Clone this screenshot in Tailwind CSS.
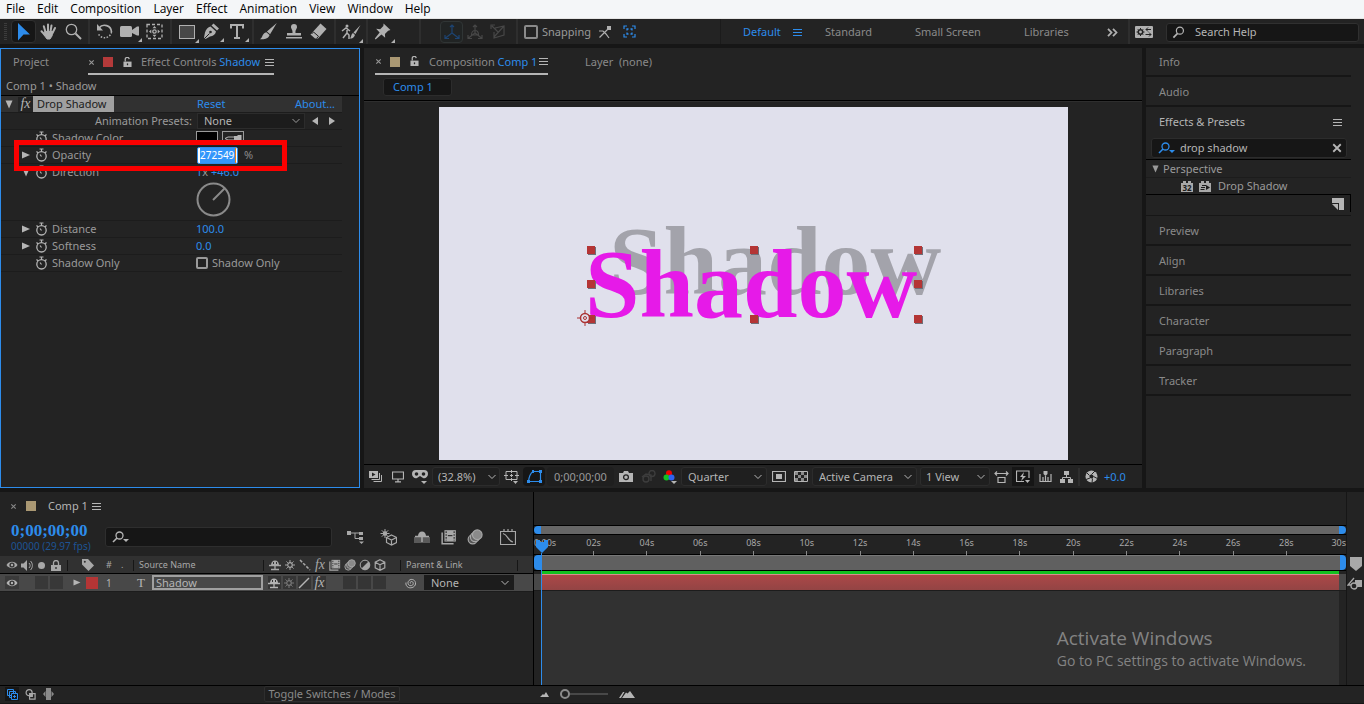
<!DOCTYPE html>
<html lang="en">
<head>
<meta charset="utf-8">
<title>Comp 1 - Shadow</title>
<script src="https://cdn.jsdelivr.net/npm/@tailwindcss/browser@4"></script>
</head>
<body class="h-screen min-w-[1300px] overflow-hidden bg-[#161616] font-['Noto_Sans',sans-serif] text-[11px] leading-4 text-[#9a9a9a] flex flex-col">

<!-- shared icons -->
<svg class="hidden" aria-hidden="true">
  <symbol id="menu" viewBox="0 0 9 9"><path d="M0 1.500h9M0 4.500h9M0 7.500h9" stroke="currentColor"/></symbol>
  <symbol id="close" viewBox="0 0 8 8"><path d="M1.500 1.500l5 5M6.500 1.500l-5 5" stroke="currentColor" stroke-width="1.200"/></symbol>
  <symbol id="lock-open" viewBox="0 0 10 12"><path d="M0.500 5h9v6h-9z" fill="currentColor"/><path d="M2.500 5V3a2.200 2.200 0 0 1 4.400 -.8" fill="none" stroke="currentColor" stroke-width="1.400"/><path d="M5 7v2" stroke="#232323" stroke-width="1.400"/></symbol>
  <symbol id="chev" viewBox="0 0 8 6"><path d="M.5 1l3.500 3.500L7.500 1" fill="none" stroke="currentColor"/></symbol>
  <symbol id="right" viewBox="0 0 8 8"><path d="M0 0.500l8 3.500-8 3.500z" fill="currentColor"/></symbol>
  <symbol id="down" viewBox="0 0 8 9"><path d="M0.500 0.500h7L4 8.500z" fill="currentColor"/></symbol>
  <symbol id="watch" viewBox="0 0 12 14"><circle cx="6" cy="8.300" r="4.700" fill="none" stroke="currentColor" stroke-width="1.300"/><path d="M4 1h4M6 1v2.500M1 3.500l1.500 1.300M11 3.500L9.500 4.800M6 8.500L4.500 6.500" fill="none" stroke="currentColor" stroke-width="1.200"/></symbol>
  <symbol id="corner" viewBox="0 0 4 4"><path d="M4 0v4H0z" fill="currentColor"/></symbol>
  <symbol id="search" viewBox="0 0 14 14"><circle cx="8.500" cy="5" r="3.800" fill="none" stroke="currentColor" stroke-width="1.300"/><path d="M6 8l-4.500 4.500" stroke="currentColor" stroke-width="1.800"/></symbol>
  <symbol id="searchd" viewBox="0 0 18 12"><circle cx="7.500" cy="4.500" r="3.500" fill="none" stroke="currentColor" stroke-width="1.300"/><path d="M5 7l-4 4" stroke="currentColor" stroke-width="1.600"/><path d="M11 8h6l-3 3z" fill="currentColor"/></symbol>
  <symbol id="eye" viewBox="0 0 12 10"><path d="M.5 5C3 .8 9 .8 11.500 5 9 9.200 3 9.200.5 5z" fill="currentColor"/><circle cx="6" cy="5" r="2.600" fill="#333"/><circle cx="6" cy="5" r="1.200" fill="currentColor"/></symbol>
  <symbol id="shy" viewBox="0 0 12 12"><path d="M2 6a4 4.500 0 0 1 8 0z" fill="currentColor"/><path d="M0 6.500h12M6 5v6M2 10.500h8" stroke="currentColor" stroke-width="1.300"/><path d="M4.500 3v2M7.500 3v2" stroke="#333"/></symbol>
  <symbol id="sun" viewBox="0 0 12 12"><circle cx="6" cy="6" r="2.300" fill="none" stroke="currentColor" stroke-width="1.200"/><path d="M6 1v2M6 9v2M1 6h2M9 6h2M2.500 2.500l1.300 1.300M8.200 8.200l1.300 1.300M9.500 2.500L8.200 3.800M3.800 8.200L2.500 9.500" stroke="currentColor"/></symbol>
  <symbol id="film" viewBox="0 0 14 14"><path d="M3 1h10v10H3z" fill="currentColor"/><path d="M1 3v10h10" fill="none" stroke="currentColor" stroke-width="1.300"/><path d="M4.500 2v8M11.500 2v8" stroke="#2b2b2b" stroke-dasharray="1.500 1"/><path d="M6 5.800h4" stroke="#2b2b2b"/></symbol>
  <symbol id="blur" viewBox="0 0 14 14"><circle cx="5" cy="9" r="4" fill="#555" stroke="currentColor"/><circle cx="7" cy="7" r="4" fill="#666" stroke="currentColor"/><circle cx="9" cy="5" r="4.200" fill="#8a8a8a" stroke="currentColor"/></symbol>
  <symbol id="cube" viewBox="0 0 12 12"><path d="M6 .7l4.800 2.500v5.600L6 11.300 1.200 8.800V3.200zM1.200 3.200L6 5.800l4.800-2.600M6 5.800v5.500" fill="none" stroke="currentColor" stroke-width="1.200"/></symbol>
</svg>

<!-- menu bar -->
<nav class="flex h-[19px] shrink-0 gap-3 border-b border-[#e4e4e4] bg-[#f4f6f8] pl-[6px] font-['Open_Sans',sans-serif] text-[12px] leading-[18px] text-black">
  <a href="#">File</a><a href="#">Edit</a><a href="#">Composition</a><a href="#">Layer</a><a href="#">Effect</a><a href="#">Animation</a><a href="#">View</a><a href="#">Window</a><a href="#">Help</a>
</nav>

<!-- tool bar -->
<header class="flex h-[25px] shrink-0 items-stretch bg-[#232323] text-[#b0b0b0]">
  <div class="flex w-[11px] items-center pl-1"><span class="h-[18px] w-[3px] bg-[repeating-linear-gradient(#3c3c3c_0_1px,transparent_1px_2px)]"></span></div>
  <div class="flex items-center border-r-2 border-[#2e2e2e] pr-[2px]">
    <button aria-label="Selection" class="flex h-[23px] w-[25px] items-center justify-center rounded-sm border border-[#303030] bg-[#161616] text-[#2d8ceb]"><svg class="h-[18px] w-[14px]" viewBox="0 0 14 18"><path d="M1 0l12 11.500H6.500L1 17.500z" fill="currentColor"/></svg></button>
    <button aria-label="Hand" class="flex w-[25px] justify-center"><svg class="size-[17px]" viewBox="0 0 17 17" fill="none" stroke="currentColor" stroke-width="2" stroke-linecap="round"><path d="M5.500 9L3.800 3.200M8 8V1.500M10.500 8.500l1-6M12.500 10L15 5M1.500 8.200L5 12"/><path d="M5 8.500h8l-1 4.500-2 3H7l-3-4z" fill="currentColor" stroke-width="1"/></svg></button>
    <button aria-label="Zoom" class="flex w-[25px] justify-center"><svg class="size-[17px]" viewBox="0 0 17 17" fill="none" stroke="currentColor"><circle cx="6.500" cy="6.500" r="5.200" stroke-width="1.300"/><path d="M10.500 10.500l5.500 5.500" stroke-width="2"/></svg></button>
  </div>
  <div class="flex items-center border-r-2 border-[#2e2e2e] pl-[2px] pr-[3px]">
    <button aria-label="Rotate" class="flex w-[25px] justify-center"><svg class="size-[17px]" viewBox="0 0 17 17" fill="none" stroke="currentColor"><path d="M3 5a7 7 0 0 1 12.500 4" stroke-width="1.700"/><path d="M15.500 9a7 7 0 0 1-13.500 1" stroke-width="1.500" stroke-dasharray="1.500 1.500"/><path d="M1 1v6.500h6z" fill="currentColor" stroke="none"/></svg></button>
    <button aria-label="Camera" class="relative flex w-[25px] justify-center"><svg class="h-[13px] w-[19px]" viewBox="0 0 19 13" fill="currentColor"><rect x="0" y="1" width="12" height="11" rx="1.500"/><path d="M12 5l5-3.500h2v9h-2L12 8z"/></svg><svg class="absolute -bottom-1 right-0 size-[4px]"><use href="#corner"/></svg></button>
    <button aria-label="Pan behind" class="flex w-[25px] justify-center"><svg class="size-[17px]" viewBox="0 0 17 17" fill="none" stroke="currentColor"><rect x="1" y="1.500" width="15" height="14" stroke-dasharray="3 2" stroke-width="1.300"/><circle cx="8.500" cy="8.500" r="1.700" stroke-width="1.300"/><path d="M8.500 3l2 2.300h-4zM8.500 14l2-2.300h-4zM3 8.500l2.300-2v4zM14 8.500l-2.300-2v4z" fill="currentColor" stroke="none"/></svg></button>
  </div>
  <div class="flex items-center border-r-2 border-[#2e2e2e] pl-[2px] pr-[3px]">
    <button aria-label="Rectangle" class="relative flex w-[25px] justify-center"><svg class="h-[14px] w-[16px]" viewBox="0 0 16 14"><rect x=".5" y=".5" width="15" height="13" fill="#484848" stroke="currentColor"/></svg><svg class="absolute -bottom-1 right-0 size-[4px]"><use href="#corner"/></svg></button>
    <button aria-label="Pen" class="relative flex w-[25px] justify-center"><svg class="size-[17px]" viewBox="0 0 17 17" fill="currentColor"><path d="M10.500 0.500l5.500 5-2 2-5.500-5zM7.500 3.500l5.500 5c-.5 3-3 4.500-6 5L2.500 16 1 14.500l1-5C3 6.500 5 4 7.500 3.500z"/><path d="M1.500 15.500l5-5" stroke="#232323"/><circle cx="7.500" cy="9" r="1.300" fill="#232323"/></svg><svg class="absolute -bottom-[2px] right-0 size-[4px]"><use href="#corner"/></svg></button>
    <button aria-label="Type" class="relative flex w-[25px] justify-center"><svg class="h-[15px] w-[14px]" viewBox="0 0 14 15"><path d="M1 4.500V1h12v3.500M7 1v13M4 14h6" fill="none" stroke="currentColor" stroke-width="2"/></svg><svg class="absolute -bottom-[3px] right-0 size-[4px]"><use href="#corner"/></svg></button>
  </div>
  <div class="flex items-center border-r-2 border-[#2e2e2e] pl-[2px] pr-[3px]">
    <button aria-label="Brush" class="flex w-[25px] justify-center"><svg class="size-[17px]" viewBox="0 0 16 16" fill="currentColor"><path d="M15.800 0L9.500 10.500 6.500 8zM6 8.800l3 2.500C8 15 3.500 15.800 0 15.200c2.500-1 2-5.500 6-6.400z"/></svg></button>
    <button aria-label="Clone stamp" class="flex w-[25px] justify-center"><svg class="size-[16px]" viewBox="0 0 16 16" fill="currentColor"><path d="M8 0a3 3 0 0 1 3 3c0 2-1.800 2.500-1.500 6H15v2.500H1V9h5.500C6.800 5.500 5 5 5 3a3 3 0 0 1 3-3zM0 13h16v1.500H0z"/></svg></button>
    <button aria-label="Eraser" class="flex w-[25px] justify-center"><svg class="size-[17px]" viewBox="0 0 17 17" fill="currentColor"><path d="M10.500 0.500l6 5.500-8.500 9.500H5L.5 11.500z"/><path d="M1.500 11l2-2 5 4.300-1.800 2" stroke="#232323" fill="none"/></svg></button>
  </div>
  <div class="flex items-center border-r-2 border-[#2e2e2e] pl-[2px] pr-[3px]">
    <button aria-label="Roto brush" class="relative flex w-[25px] justify-center"><svg class="h-[16px] w-[20px]" viewBox="0 0 20 16" fill="none" stroke="currentColor" stroke-width="1.500"><circle cx="6" cy="2" r="1.500" fill="currentColor" stroke="none"/><path d="M6 4v5l2 2v4M6 9l-4 5M1 7l4-3 4 3"/><path d="M19.500 1l-5 9-2-1.500zM12 9l2 2c-1 3-3 3.500-5 3.500 1.500-2 1-4.500 3-5.500z" fill="currentColor" stroke="none"/></svg><svg class="absolute -bottom-[3px] right-0 size-[4px]"><use href="#corner"/></svg></button>
  </div>
  <div class="flex items-center border-r-2 border-[#2e2e2e] pl-[2px] pr-[24px]">
    <button aria-label="Puppet pin" class="relative flex w-[25px] justify-center"><svg class="size-[17px]" viewBox="0 0 16 16" fill="currentColor"><path d="M9 .5l6.500 6.200-2.200.6-3 3 .2 3.500L7 10.800l-5.500 4.700-.7-.8L5.300 9 2 5.500l3.800.3 3-3z"/></svg><svg class="absolute -bottom-[3px] right-0 size-[4px]"><use href="#corner"/></svg></button>
  </div>
  <div class="flex items-center border-r-2 border-[#2e2e2e] pl-[19px] pr-[7px] text-[#474747]">
    <button aria-label="Local axis" class="flex h-[22px] w-[23px] items-center justify-center rounded-sm border border-[#303535] bg-[#212424] text-[#1d4472]"><svg class="size-[16px]" viewBox="0 0 16 16" fill="none" stroke="currentColor" stroke-width="1.200"><path d="M8 1v8L1.500 14M8 9l6.500 5M6 3l2-2 2 2M1 11v3.500h4M15 11v3.500h-4"/></svg></button>
    <button aria-label="World axis" class="flex w-[23px] justify-center"><svg class="size-[16px]" viewBox="0 0 16 16" fill="none" stroke="currentColor" stroke-width="1.200"><path d="M8 1v8L1.500 14M8 9l6.500 5M6 3l2-2 2 2M1 11v3.500h4M15 11v3.500h-4M4.500 11c0-6 7-6 7 0z"/></svg></button>
    <button aria-label="View axis" class="flex w-[23px] justify-center"><svg class="size-[16px]" viewBox="0 0 16 16" fill="none" stroke="currentColor" stroke-width="1.200"><path d="M2 2l6 6M1 5V1h4M5 4l9-2v9l-10 3V8M14 2L4 13"/></svg></button>
  </div>
  <label class="flex items-center gap-[4px] pl-[6px] text-[#9a9a9a]"><input type="checkbox" class="size-[14px] appearance-none rounded-[2px] border-2 border-[#8a8a8a]"><span class="w-[51px]">Snapping</span></label>
  <div class="flex flex-1 items-center">
    <button aria-label="Snap edges" class="flex w-[24px] justify-center"><svg class="size-[14px]" viewBox="0 0 14 14" fill="none" stroke="currentColor" stroke-width="1.200"><path d="M1 6h4l3 3 3 4M1.500 12.500L11 3"/><path d="M9 1h4v4h-4z" fill="currentColor" stroke="none"/></svg></button>
    <button aria-label="Snap bounds" class="flex w-[25px] justify-center text-[#2d8ceb]"><svg class="size-[13px]" viewBox="0 0 13 13" fill="none" stroke="currentColor" stroke-width="1.200"><path d="M1 4V1h3M9 1h3v3M12 9v3H9M4 12H1V9"/><path d="M4 5.500V4h1.500M7.500 4H9v1.500M9 7.500V9H7.500M5.500 9H4V7.500" stroke-width="1.300"/></svg></button>
  </div>
  <div class="flex items-center border-l border-[#1b1b1b] pl-[22px] pt-px text-[#8a8a8a]">
    <a href="#" class="w-[50px] text-[#2d8ceb]">Default</a>
    <button aria-label="Workspace menu" class="w-[32px] text-[#2d8ceb]"><svg class="size-[9px]"><use href="#menu"/></svg></button>
    <a href="#" class="w-[90px]">Standard</a><a href="#" class="w-[109px]">Small Screen</a><a href="#" class="w-[83px]">Libraries</a>
    <button aria-label="More workspaces" class="w-[21px] text-[#b0b0b0]"><svg class="h-[9px] w-[11px]" viewBox="0 0 11 9" fill="none" stroke="currentColor" stroke-width="1.800"><path d="M1 .8l3.500 3.700L1 8.200M6 .8l3.500 3.700L6 8.200"/></svg></button>
  </div>
  <div class="flex items-center border-l-2 border-[#2e2e2e] pl-[5px] pt-px">
    <button aria-label="Workspace settings" class="w-[31px]"><svg class="h-[12px] w-[18px]" viewBox="0 0 18 12"><rect width="18" height="12" rx="1" fill="#b0b0b0"/><circle cx="5.500" cy="6" r="2.200" fill="none" stroke="#232323" stroke-width="1.500"/><path d="M5.500 2v1.500M5.500 8.500V10M1.500 6H3M8 6h1.500M2.800 3.300l1 1M8.200 8.700l-1-1M8.200 3.300l-1 1M2.800 8.700l1-1M11 3.500h5M13 1.500L11 3.500l2 2M10.500 8.500h5.500M14 6.500l2 2-2 2" stroke="#232323" fill="none"/></svg></button>
    <label class="mr-[5px] flex h-[19px] w-[193px] items-center gap-[10px] rounded-[3px] border border-[#303030] bg-[#161616] pl-[5px] text-[#b5b5b5]"><svg class="size-[13px] shrink-0"><use href="#search"/></svg><input aria-label="Search Help" value="Search Help" class="w-full min-w-0 bg-transparent outline-none"></label>
  </div>
</header>

<!-- panels -->
<main class="flex min-h-0 flex-1 gap-1 pt-1">
  <!-- effect controls -->
  <section class="w-[360px] shrink-0 border border-[#2d8ceb] bg-[#232323]">
    <div class="flex h-[26px] items-stretch">
      <a href="#" class="w-[87px] pl-3 pt-[5px] text-[#8a8a8a]">Project</a>
      <div class="flex w-[186px] items-center border-b-2 border-[#b5b5b5] pt-[2px]">
        <button aria-label="Close tab" class="w-[15px]"><svg class="size-[7px]"><use href="#close"/></svg></button>
        <span class="size-[10px] bg-[#b43a3a]"></span>
        <svg class="ml-[10px] mr-[9px] h-[11px] w-[9px] text-[#b5b5b5]"><use href="#lock-open"/></svg>
        <span class="flex-1 whitespace-nowrap text-[#8a8a8a]">Effect Controls <span class="text-[#2d8ceb]">Shadow</span></span>
        <button aria-label="Panel menu" class="text-[#b5b5b5]"><svg class="size-[9px]"><use href="#menu"/></svg></button>
      </div>
    </div>
    <div class="h-[21px] border-b border-black pl-[5px] pt-[3px]">Comp 1 • Shadow</div>
    <div class="w-[341px] text-[#9a9a9a]">
      <div class="flex h-[17px] items-center border-b border-[#1c1c1c] bg-[#313131]">
        <button aria-label="Collapse" class="w-[17px] pl-1 text-[#b5b5b5]"><svg class="h-[9px] w-[8px]"><use href="#down"/></svg></button>
        <button class="flex h-[15px] w-[15px] items-center justify-center bg-[#232323] font-['Liberation_Serif',serif] text-[14px] italic text-[#b5b5b5]">fx</button>
        <span class="flex h-4 w-[81px] items-center bg-[#a0a0a0] px-1 text-[#1c1c1c]">Drop Shadow</span>
        <a href="#" class="ml-[83px] w-[98px] text-[#2d8ceb]">Reset</a>
        <a href="#" class="text-[#2d8ceb]">About...</a>
      </div>
      <div class="flex h-[17px] items-center border-b border-[#1c1c1c]">
        <label for="preset" class="w-[196px] pr-[5px] text-right">Animation Presets:</label>
        <div class="relative flex h-4 w-[108px] items-center border border-[#2c2c2c] bg-[#1c1c1c]"><select id="preset" class="w-full appearance-none pl-[6px] text-[#b5b5b5] outline-none"><option>None</option></select><svg class="absolute right-1 h-[6px] w-[8px]"><use href="#chev"/></svg></div>
        <button aria-label="Previous preset" class="ml-[7px] rotate-180 text-[#b5b5b5]"><svg class="h-[8px] w-[6px]" viewBox="0 0 6 8"><path d="M0 0l6 4-6 4z" fill="currentColor"/></svg></button>
        <button aria-label="Next preset" class="ml-[11px] text-[#b5b5b5]"><svg class="h-[8px] w-[6px]" viewBox="0 0 6 8"><path d="M0 0l6 4-6 4z" fill="currentColor"/></svg></button>
      </div>
      <div class="flex h-[17px] items-center border-b border-[#1c1c1c]">
        <svg class="ml-[34px] mr-1 h-[14px] w-[13px] text-[#b5b5b5]"><use href="#watch"/></svg>
        <span class="w-[144px]">Shadow Color</span>
        <button aria-label="Shadow color" class="h-[14px] w-[22px] border border-[#9a9a9a] bg-black"></button>
        <button aria-label="Eyedropper" class="ml-1 flex h-[14px] w-[22px] items-center justify-center border border-[#9a9a9a]"><svg class="h-[10px] w-[18px]" viewBox="0 0 18 10"><path d="M11 4H4L1 5.500 4 7h7" fill="none" stroke="#b5b5b5"/><path d="M10 3h3l1-1h3.500v6H14l-1-1h-3z" fill="#b5b5b5"/></svg></button>
      </div>
      <div class="relative flex h-[17px] items-center border-b border-[#1c1c1c]">
        <button aria-label="Expand opacity" class="ml-[21px] w-[13px] text-[#b5b5b5]"><svg class="size-[8px]"><use href="#right"/></svg></button>
        <svg class="mr-1 h-[14px] w-[13px] text-[#b5b5b5]"><use href="#watch"/></svg>
        <label for="opacity" class="w-[145px]">Opacity</label>
        <div class="flex h-[17px] w-[41px] items-center rounded-[2px] border border-[#2d8ceb] bg-white pl-[2px]"><input id="opacity" value="272549" class="h-[15px] w-[36px] border-r border-[#e08020] bg-[#3396fb] text-[10px] text-white outline-none"></div>
        <span class="ml-[6px] text-[#8a8a8a]">%</span>
        <div class="pointer-events-none absolute left-[13px] -top-[7px] z-10 h-[31px] w-[273px] border-[5px] border-[#fb0000]"></div>
      </div>
      <div class="h-[57px] border-b border-[#1c1c1c]">
        <div class="flex h-4 items-center">
          <button aria-label="Collapse direction" class="ml-[21px] w-[13px] text-[#b5b5b5]"><svg class="h-[9px] w-[8px]"><use href="#down"/></svg></button>
          <svg class="mr-1 h-[14px] w-[13px] text-[#b5b5b5]"><use href="#watch"/></svg>
          <span class="w-[144px]">Direction</span>
          <span class="text-[#2d8ceb]">1<span class="text-[#9a9a9a]">x</span> +46.0</span>
        </div>
        <svg class="ml-[195px] mt-[2px] size-[35px]" viewBox="0 0 35 35" fill="none" stroke="#8a8a8a" stroke-width="2"><circle cx="17.500" cy="17.500" r="16"/><path d="M17 18L29 6"/></svg>
      </div>
      <div class="flex h-[17px] items-center border-b border-[#1c1c1c]">
        <button aria-label="Expand distance" class="ml-[21px] w-[13px] text-[#b5b5b5]"><svg class="size-[8px]"><use href="#right"/></svg></button>
        <svg class="mr-1 h-[14px] w-[13px] text-[#b5b5b5]"><use href="#watch"/></svg>
        <span class="w-[144px]">Distance</span><a href="#" class="text-[#2d8ceb]">100.0</a>
      </div>
      <div class="flex h-[17px] items-center border-b border-[#1c1c1c]">
        <button aria-label="Expand softness" class="ml-[21px] w-[13px] text-[#b5b5b5]"><svg class="size-[8px]"><use href="#right"/></svg></button>
        <svg class="mr-1 h-[14px] w-[13px] text-[#b5b5b5]"><use href="#watch"/></svg>
        <span class="w-[144px]">Softness</span><a href="#" class="text-[#2d8ceb]">0.0</a>
      </div>
      <div class="flex h-[17px] items-center border-b border-[#1c1c1c]">
        <svg class="ml-[34px] mr-1 h-[14px] w-[13px] text-[#b5b5b5]"><use href="#watch"/></svg>
        <span class="w-[144px]">Shadow Only</span>
        <label class="flex items-center gap-[4px]"><input type="checkbox" class="size-[12px] appearance-none rounded-[2px] border-2 border-[#9a9a9a]">Shadow Only</label>
      </div>
    </div>
  </section>

  <!-- composition -->
  <section class="flex min-w-0 flex-1 flex-col bg-[#232323]">
    <div class="flex h-[27px] shrink-0 items-stretch pl-[11px]">
      <div class="flex w-[173px] items-center border-b-2 border-[#b5b5b5] pt-[2px]">
        <button aria-label="Close tab" class="w-[15px]"><svg class="size-[7px]"><use href="#close"/></svg></button>
        <span class="size-[10px] bg-[#aa9873]"></span>
        <svg class="ml-[10px] mr-[10px] h-[11px] w-[9px] text-[#b5b5b5]"><use href="#lock-open"/></svg>
        <span class="flex-1 whitespace-nowrap text-[#8a8a8a]">Composition <span class="text-[#2d8ceb]">Comp 1</span></span>
        <button aria-label="Panel menu" class="text-[#b5b5b5]"><svg class="size-[9px]"><use href="#menu"/></svg></button>
      </div>
      <a href="#" class="ml-[37px] pt-[6px] text-[#8a8a8a]">Layer&nbsp; (none)</a>
    </div>
    <div class="h-[26px] shrink-0 border-b border-black pl-[19px] pt-[3px]"><button class="flex h-[18px] w-[69px] items-center rounded-[3px] border border-[#2c2c2c] bg-[#161616] pl-[9px] text-[#2d8ceb]">Comp 1</button></div>
    <div class="flex min-h-0 flex-1 items-center justify-center border-t border-[#2e2e2e] pb-1 pt-[5px]">
      <svg class="h-full max-w-full bg-[#e0e0ec]" viewBox="0 0 629 353" font-family="Liberation Serif, serif" font-weight="700" font-size="98">
        <text x="146" y="210" fill="#e61ae8" class="drop-shadow-[24px_-23px_0_#a3a3ab]">Shadow</text>
        <g fill="#6f6f78"><path d="M149 140h8v8h-8zM312 140h8v8h-8zM476 140h8v8h-8zM149 174h8v8h-8zM476 174h8v8h-8zM149 209h8v8h-8zM312 209h8v8h-8zM476 209h8v8h-8z"/></g>
        <g fill="#b43535"><path d="M148 139h8v8h-8zM311 139h8v8h-8zM475 139h8v8h-8zM148 173h8v8h-8zM475 173h8v8h-8zM148 208h8v8h-8zM311 208h8v8h-8zM475 208h8v8h-8z"/></g>
        <g fill="none" stroke="#a33"><circle cx="146" cy="211" r="4.500" stroke-width="1.500" fill="#e0e0ec"/><circle cx="146" cy="211" r="1.500"/><path d="M146 203v4M146 215v4M138 211h4M150 211h4"/></g>
      </svg>
    </div>
    <div class="flex h-[24px] shrink-0 items-center border-t border-black text-[#b5b5b5]">
      <button aria-label="Always preview" class="flex w-[24px] justify-center"><svg class="h-[11px] w-[14px]" viewBox="0 0 14 11"><path d="M0 0h9v7H0z" fill="currentColor"/><path d="M3 1.500l3.500 2L3 5.500z" fill="#232323"/><path d="M2.500 8.500h8V2M4.500 10.500h8V4" fill="none" stroke="currentColor"/></svg></button>
      <button aria-label="Primary viewer" class="flex w-[20px] justify-center"><svg class="h-[12px] w-[12px]" viewBox="0 0 12 12"><path d="M.5 1h11v7H.5zM6 8v2.500M3 10.800h6" fill="none" stroke="currentColor" stroke-width="1.200"/></svg></button>
      <button aria-label="3D goggles" class="flex w-[24px] justify-center"><svg class="h-[14px] w-[16px]" viewBox="0 0 16 14"><path d="M0 4a4 4 0 0 1 4-4h8a4 4 0 0 1 4 4c0 3-3 5-5 4L8 6 5 8C3 9 0 7 0 4z" fill="currentColor"/><circle cx="4.500" cy="4" r="1.800" fill="#232323"/><circle cx="11.500" cy="4" r="1.800" fill="#232323"/><path d="M9 11h6l-3 3z" fill="currentColor"/></svg></button>
      <div class="relative flex h-[19px] w-[68px] items-center rounded-[3px] border border-[#2c2c2c] bg-[#1f1f1f]"><select aria-label="Magnification" class="w-full appearance-none pl-[5px] outline-none"><option>(32.8%)</option></select><svg class="absolute right-[3px] h-[6px] w-[8px]"><use href="#chev"/></svg></div>
      <button aria-label="Grid and guides" class="flex w-[23px] justify-center"><svg class="h-[14px] w-[15px]" viewBox="0 0 15 14" fill="none" stroke="currentColor"><path d="M2 1.500h11v8H2zM7.500 0v3M7.500 8v3M0 5.500h4M11 5.500h4M6 5.500h3M7.500 4v3"/><path d="M9 11h5l-2.500 3z" fill="currentColor" stroke="none"/></svg></button>
      <button aria-label="Mask visibility" class="flex h-[19px] w-[22px] items-center justify-center rounded-sm bg-[#161616] text-[#2d8ceb]"><svg class="h-[13px] w-[15px]" viewBox="0 0 15 13" fill="none" stroke="currentColor" stroke-width="1.200"><path d="M1.500 11.500C2 6 4 3 6 1.500h7.500v10z"/><path d="M0 10h3v3H0zM5 0h2v3H5zM12 0h3v3h-3zM12 10h3v3h-3z" fill="currentColor" stroke="none"/></svg></button>
      <button class="ml-[2px] h-[19px] w-[67px] rounded-sm bg-[#1f1f1f] pl-[7px] text-left text-[#9a9a9a]">0;00;00;00</button>
      <button aria-label="Snapshot" class="flex w-[24px] justify-center"><svg class="h-[11px] w-[14px]" viewBox="0 0 14 11"><path d="M0 2h4l1-2h4l1 2h4v9H0z" fill="currentColor"/><circle cx="7" cy="6.200" r="2.400" fill="none" stroke="#232323" stroke-width="1.300"/></svg></button>
      <button aria-label="Show snapshot" class="flex w-[21px] justify-center text-[#3d3d3d]"><svg class="h-[13px] w-[15px]" viewBox="0 0 15 13" fill="none" stroke="currentColor" stroke-width="1.400"><circle cx="11" cy="3.500" r="3"/><circle cx="5" cy="9" r="3"/><path d="M1 7l4-3 5 1v6"/></svg></button>
      <button aria-label="Channels" class="flex w-[22px] justify-center"><svg class="h-[14px] w-[14px]" viewBox="0 0 14 14"><circle cx="6" cy="3.300" r="3" fill="#f00000"/><circle cx="3.500" cy="7.500" r="3" fill="#12c020"/><circle cx="8.500" cy="7.500" r="3" fill="#2f62f0"/><path d="M8 11h6l-3 3z" fill="currentColor"/></svg></button>
      <div class="relative flex h-[19px] w-[86px] items-center rounded-[3px] border border-[#2c2c2c] bg-[#1f1f1f]"><select aria-label="Resolution" class="w-full appearance-none pl-[6px] outline-none"><option>Quarter</option></select><svg class="absolute right-1 h-[6px] w-[8px]"><use href="#chev"/></svg></div>
      <button aria-label="Region of interest" class="flex w-[23px] justify-center"><svg class="h-[11px] w-[14px]" viewBox="0 0 14 11"><path d="M.5.500h13v10H.5z" fill="none" stroke="currentColor" stroke-width="1.200"/><path d="M4 3h6v5H4z" fill="currentColor"/></svg></button>
      <button aria-label="Transparency grid" class="flex w-[22px] justify-center"><svg class="h-[11px] w-[14px]" viewBox="0 0 14 11"><path d="M.5.500h13v10H.5z" fill="none" stroke="currentColor"/><path d="M1 1h3v3H1zM7 1h3v3H7zM4 4h3v3H4zM10 4h3v3h-3zM1 7h3v3H1zM7 7h3v3H7z" fill="#8a8a8a"/></svg></button>
      <div class="relative flex h-[19px] w-[105px] items-center rounded-[3px] border border-[#2c2c2c] bg-[#1f1f1f]"><select aria-label="3D view" class="w-full appearance-none pl-[6px] outline-none"><option>Active Camera</option></select><svg class="absolute right-1 h-[6px] w-[8px]"><use href="#chev"/></svg></div>
      <div class="relative ml-[3px] flex h-[19px] w-[70px] items-center rounded-[3px] border border-[#2c2c2c] bg-[#1f1f1f]"><select aria-label="View layout" class="w-full appearance-none pl-[5px] outline-none"><option>1 View</option></select><svg class="absolute right-1 h-[6px] w-[8px]"><use href="#chev"/></svg></div>
      <button aria-label="Pixel aspect" class="flex w-[22px] justify-center"><svg class="h-[12px] w-[15px]" viewBox="0 0 15 12" fill="none" stroke="currentColor" stroke-width="1.200"><path d="M1 2.500h13M3 .5l-2 2 2 2M12 .5l2 2-2 2M4 6.500h7v5H4z"/></svg></button>
      <button aria-label="Fast previews" class="flex h-[19px] w-[22px] items-center justify-center bg-[#161616]"><svg class="h-[13px] w-[14px]" viewBox="0 0 14 13"><path d="M8 11.500H.5V1h12.500v7" fill="none" stroke="currentColor" stroke-width="1.200"/><path d="M8 2L4 7h2.500L5 11l5-5H7z" fill="currentColor"/><path d="M9 10h5l-2.500 3z" fill="currentColor"/></svg></button>
      <button aria-label="Timeline" class="flex w-[22px] justify-center"><svg class="h-[12px] w-[13px]" viewBox="0 0 13 12" fill="none" stroke="currentColor" stroke-width="1.200"><path d="M1 3v7.500h11V3M4 6v4M6.500 5v5M9 6v4"/><path d="M4.500 0h4v3l-2 2-2-2z" fill="currentColor" stroke="none"/></svg></button>
      <button aria-label="Flowchart" class="flex w-[21px] justify-center"><svg class="h-[12px] w-[13px]" viewBox="0 0 13 12"><path d="M4 0h5v4H4zM0 8h5v4H0zM8 8h5v4H8z" fill="currentColor"/><path d="M6.500 4v2.500M2.500 8V6.500h8V8" fill="none" stroke="currentColor"/></svg></button>
      <button aria-label="Reset exposure" class="ml-px flex h-[18px] w-[26px] items-center justify-center border-l-2 border-[#2e2e2e] pr-[2px]"><svg class="size-[13px]" viewBox="0 0 13 13"><circle cx="6.500" cy="6.500" r="6" fill="currentColor"/><circle cx="6.500" cy="6.500" r="2" fill="#232323"/><path d="M6.500 4.500L10 1M8.500 6.500l3.800 2M7.500 8.500L7 12.800M5 8L1 9.500M4.500 5.500L1.500 2.500" stroke="#232323" fill="none"/></svg></button>
      <a href="#" class="text-[#2d8ceb]">+0.0</a>
    </div>
  </section>

  <!-- side panels -->
  <aside class="w-[218px] shrink-0 bg-[#232323] pr-[13px] text-[#8a8a8a]">
    <a href="#" class="block h-[29px] border-b-2 border-[#161616] pl-[13px] pt-[6px]">Info</a>
    <a href="#" class="flex h-[30px] items-center border-b-2 border-[#161616] pl-[13px] pt-[2px]">Audio</a>
    <div class="flex h-[30px] items-center justify-between pl-[13px] pr-[9px] text-[#b5b5b5]">Effects &amp; Presets<button aria-label="Panel menu"><svg class="size-[9px]"><use href="#menu"/></svg></button></div>
    <label class="ml-[5px] mr-1 mt-px flex h-[20px] items-center rounded-[3px] border border-[#2c2c2c] bg-[#161616] pl-[6px] pr-[3px] text-[#b5b5b5]"><svg class="mr-[4px] h-[12px] w-[18px] shrink-0 text-[#2d8ceb]"><use href="#searchd"/></svg><input aria-label="Search effects" value="drop shadow" class="w-full min-w-0 bg-transparent outline-none"><svg class="size-[12px] shrink-0"><use href="#close"/></svg></label>
    <div class="mt-px flex h-[18px] items-center gap-[4px] border-t border-black pl-[6px] text-[#9a9a9a]"><svg class="h-[8px] w-[7px]"><use href="#down"/></svg>Perspective</div>
    <div class="flex h-[17px] items-center border-t border-[#1c1c1c] pl-[35px] text-[#9a9a9a]">
      <svg class="mr-[6px] h-[11px] w-[12px]" viewBox="0 0 12 11"><path d="M0 2h2V0h3v2h2V0h3v2h2v9H0z" fill="#a8a8a8"/><text x="6" y="9.500" text-anchor="middle" font-size="8" font-weight="700" fill="#1c1c1c">32</text></svg>
      <svg class="mr-[7px] h-[11px] w-[12px]" viewBox="0 0 12 11"><path d="M0 2h2V0h3v2h2V0h3v2h2v9H0z" fill="#a8a8a8"/><path d="M3 4.500h4M2 6.500h4M1.500 8.500h4" stroke="#1c1c1c"/><path d="M7 4l4 2.500L7 9z" fill="#1c1c1c"/></svg>Drop Shadow</div>
    <div class="h-[22px] border-b border-t border-b-[#161616] border-t-black"><div class="flex h-[17px] items-center justify-end border-r border-black pr-[6px]"><button aria-label="New bin"><svg class="size-[12px]" viewBox="0 0 12 12"><path d="M0 0h12v12H7V5H0z" fill="#b5b5b5"/><path d="M0 6h6v6z" fill="#b5b5b5"/></svg></button></div></div>
    <a href="#" class="flex h-[30px] items-center border-b-2 border-[#161616] pl-[13px] pt-[2px]">Preview</a>
    <a href="#" class="flex h-[30px] items-center border-b-2 border-[#161616] pl-[13px] pt-[2px]">Align</a>
    <a href="#" class="flex h-[30px] items-center border-b-2 border-[#161616] pl-[13px] pt-[2px]">Libraries</a>
    <a href="#" class="flex h-[30px] items-center border-b-2 border-[#161616] pl-[13px] pt-[2px]">Character</a>
    <a href="#" class="flex h-[30px] items-center border-b-2 border-[#161616] pl-[13px] pt-[2px]">Paragraph</a>
    <a href="#" class="flex h-[30px] items-center border-b-2 border-[#161616] pl-[13px] pt-[2px]">Tracker</a>
  </aside>
</main>

<!-- timeline -->
<section class="relative mt-1 flex h-[212px] shrink-0 flex-col bg-[#232323]">
  <div class="flex min-h-0 flex-1">
    <div class="flex w-[534px] shrink-0 flex-col border-r border-black">
      <div class="flex h-[28px] items-center pl-[10px] text-[#b5b5b5]">
        <button aria-label="Close tab" class="w-4 text-[#8a8a8a]"><svg class="size-[7px]"><use href="#close"/></svg></button>
        <span class="size-[10px] bg-[#aa9873]"></span><span class="ml-3 w-[44px]">Comp 1</span>
        <button aria-label="Panel menu"><svg class="size-[9px]"><use href="#menu"/></svg></button>
      </div>
      <div class="flex h-[36px] pl-[11px]">
        <div class="w-[94px] shrink-0"><div class="pt-[3px] font-['Liberation_Serif',serif] text-[17px] font-bold leading-[15px] text-[#2d8ceb]">0;00;00;00</div><div class="text-[10px] leading-[16px] text-[#1d5494]">00000 (29.97 fps)</div></div>
        <label class="mt-[7px] flex h-[20px] w-[227px] items-center rounded-[3px] border border-[#2e2e2e] bg-[#161616] pl-[6px] text-[#b5b5b5]"><svg class="h-[12px] w-[18px] shrink-0"><use href="#searchd"/></svg><input aria-label="Search layers" class="w-full min-w-0 bg-transparent outline-none"></label>
        <div class="flex items-center pb-[2px] pl-[15px] text-[#a8a8a8]">
          <button aria-label="Mini-flowchart" class="w-[33px]"><svg class="h-[13px] w-[17px]" viewBox="0 0 17 13"><path d="M0 0h4v4H0zM12 1h4v3h-4zM12 6h4v3h-4z" fill="currentColor"/><path d="M4 2h8M8 2v5.500h4" fill="none" stroke="currentColor"/><path d="M12 10.500h5L14.500 13z" fill="currentColor"/></svg></button>
          <button aria-label="Draft 3D" class="w-[34px]"><svg class="size-[17px]" viewBox="0 0 17 17"><path d="M5 0v9M.5 4.500h9M1.800 1.300l6.400 6.400M8.200 1.300L1.800 7.700" stroke="currentColor"/><circle cx="5" cy="4.500" r="2.300" fill="currentColor"/><path d="M11.500 6l5 2.500v5l-5 2.500-5-2.500v-5zM6.500 8.500l5 2.500 5-2.500M11.500 11v5" fill="#232323" stroke="currentColor" stroke-width="1.200"/></svg></button>
          <button aria-label="Hide shy layers" class="w-[27px]"><svg class="size-[16px]" viewBox="0 0 16 14"><path d="M0 7h16v6H0z" fill="#5a5a5a"/><path d="M4 6a4 4.500 0 0 1 8 0z" fill="currentColor"/><path d="M1 6.500h14M8 5v7" stroke="currentColor" stroke-width="1.500"/></svg></button>
          <button aria-label="Frame blending" class="w-[26px]"><svg class="size-[16px]"><use href="#film"/></svg></button>
          <button aria-label="Motion blur" class="w-[33px]"><svg class="size-[16px]"><use href="#blur"/></svg></button>
          <button aria-label="Graph editor"><svg class="size-[16px]" viewBox="0 0 16 16" fill="none" stroke="currentColor"><path d="M.5 2.500h15v13H.5zM4 0v3M8 0v3M12 0v3M3 4.500c5 1 5 8 10 8.500" stroke-width="1.200"/></svg></button>
        </div>
      </div>
      <!-- column heads -->
      <div class="flex h-[18px] items-center border-b border-black bg-[#313131] pl-[6px] pt-px text-[9px] text-[#a8a8a8] *:shrink-0">
        <svg class="mr-[3px] h-[10px] w-[12px]"><use href="#eye"/></svg>
        <svg class="mr-[5px] h-[11px] w-[12px]" viewBox="0 0 12 11"><path d="M0 3.500h2.500L6 0v11L2.500 7.500H0z" fill="currentColor"/><path d="M8 3c1.500 1.500 1.500 3.500 0 5M9.500 1c2.500 2.500 2.500 6.500 0 9" fill="none" stroke="currentColor"/></svg>
        <span class="mr-[6px] size-[7px] rounded-full bg-[#a8a8a8]"></span>
        <svg class="h-[11px] w-[10px]" viewBox="0 0 10 11"><path d="M0 5h10v6H0z" fill="currentColor"/><path d="M2.500 5V3a2.500 2.500 0 0 1 5 0v2" fill="none" stroke="currentColor" stroke-width="1.300"/><path d="M5 7v2" stroke="#313131" stroke-width="1.400"/></svg>
        <span class="ml-[6px] h-[11px] w-px bg-[#161616]"></span>
        <svg class="ml-[14px] mr-[12px] size-[12px]" viewBox="0 0 12 12"><path d="M0 0h6l6 6.500L6.500 12 0 5.500z" fill="currentColor"/><circle cx="2.800" cy="2.800" r="1" fill="#313131"/></svg>
        <span class="w-[15px]">#</span><span class="w-[12px]">.</span>
        <span class="h-[11px] w-px bg-[#161616]"></span>
        <span class="w-[129px] pl-[5px]">Source Name</span>
        <span class="h-[11px] w-px bg-[#161616]"></span>
        <div class="flex w-[136px] items-center gap-[3px] pl-[5px] *:shrink-0"><svg class="size-[12px]"><use href="#shy"/></svg><svg class="size-[12px]"><use href="#sun"/></svg><svg class="size-[12px]" viewBox="0 0 12 12"><path d="M1 1l10 10" stroke="currentColor" stroke-width="1.500" stroke-dasharray="3 1.500"/></svg><span class="w-[12px] text-center font-['Liberation_Serif',serif] text-[14px] italic leading-3">fx</span><svg class="size-[12px]"><use href="#film"/></svg><svg class="size-[12px]"><use href="#blur"/></svg><svg class="size-[12px]" viewBox="0 0 12 12"><circle cx="6" cy="6" r="4.800" fill="none" stroke="currentColor"/><path d="M9.500 2.500a4.900 4.900 0 0 1-7 7z" fill="currentColor"/></svg><svg class="size-[12px]"><use href="#cube"/></svg></div>
        <span class="h-[11px] w-px bg-[#161616]"></span>
        <span class="w-[116px] pl-[5px]">Parent &amp; Link</span>
        <span class="h-[11px] w-px bg-[#161616]"></span>
      </div>
      <!-- layer row -->
      <div class="flex h-[17px] items-center bg-[#484848] pl-[5px] text-[#b5b5b5] *:shrink-0">
        <button aria-label="Visibility" class="flex h-[13px] w-[14px] items-center justify-center bg-[#3a3a3a]"><svg class="h-[10px] w-[12px]"><use href="#eye"/></svg></button>
        <button aria-label="Solo" class="ml-4 h-[13px] w-[13px] bg-[#383838]"></button><button aria-label="Lock" class="ml-[2px] h-[13px] w-[13px] bg-[#383838]"></button>
        <button aria-label="Expand layer" class="ml-[10px] w-[13px]"><svg class="h-[7px] w-[8px]"><use href="#right"/></svg></button>
        <button aria-label="Label color" class="size-[12px] bg-[#b43535]"></button>
        <span class="ml-2 w-[31px] text-[10px]">1</span>
        <span class="w-[15px] font-['Liberation_Serif',serif] text-[13px]">T</span>
        <input aria-label="Layer name" value="Shadow" class="h-[15px] w-[111px] border-2 border-[#a0a0a0] bg-[#484848] pl-[2px] outline-none">
        <div class="ml-[5px] flex items-center gap-[2px]">
          <button aria-label="Shy" class="size-[13px] bg-[#353535]"><svg class="size-[12px]"><use href="#shy"/></svg></button><button aria-label="Collapse" class="size-[13px] bg-[#353535] text-[#7a7a7a]"><svg class="size-[12px]"><use href="#sun"/></svg></button><button aria-label="Quality" class="size-[13px] bg-[#353535]"><svg class="size-[12px]" viewBox="0 0 12 12"><path d="M1 11L11 1" stroke="currentColor" stroke-width="1.500"/></svg></button><button class="size-[13px] bg-[#353535] font-['Liberation_Serif',serif] text-[14px] italic leading-[12px]">fx</button>
        </div>
        <div class="ml-[17px] flex gap-[2px]"><button aria-label="Motion blur" class="size-[13px] bg-[#353535]"></button><button aria-label="Adjustment" class="size-[13px] bg-[#353535]"></button><button aria-label="3D" class="size-[13px] bg-[#353535]"></button></div>
        <button aria-label="Pick whip" class="ml-[19px] mr-[7px]"><svg class="size-[12px]" viewBox="0 0 12 12"><path d="M6 6.500c-1.500-.5-.5-2.500 1-2 2 .8 1.500 4-.8 4.200C3 9 2 5.500 4 3.500 6.500 1 11 3 10.500 7c-.5 3-4 4.500-7 3.500M3.500 10.500C1.500 9.500.5 7.500 1 5.500" fill="none" stroke="currentColor"/></svg></button>
        <div class="relative flex h-[15px] w-[90px] items-center bg-[#1c1c1c]"><select aria-label="Parent" class="w-full appearance-none pl-[7px] outline-none"><option>None</option></select><svg class="absolute right-[5px] h-[6px] w-[8px]"><use href="#chev"/></svg></div>
      </div>
      <div class="flex-1 border-t border-[#1c1c1c]"></div>
    </div>

    <!-- time graph -->
    <div class="relative flex min-w-0 flex-1 flex-col pt-[33px]">
      <div class="flex h-[10px] border-y border-black"><span class="h-full w-[7px] rounded-l-full bg-[#2d8ceb]"></span><span class="flex-1 bg-[#666]"></span><span class="h-full w-[7px] rounded-r-full bg-[#2d8ceb]"></span></div>
      <div class="relative grid h-[19px] grid-cols-14 pl-[33px] pr-[33px] text-[9px] text-[#a8a8a8]">
        <div class="flex flex-col items-center justify-between"><span>02s</span><i class="h-[5px] w-px bg-[#8a8a8a]"></i></div>
        <div class="flex flex-col items-center justify-between"><span>04s</span><i class="h-[5px] w-px bg-[#8a8a8a]"></i></div>
        <div class="flex flex-col items-center justify-between"><span>06s</span><i class="h-[5px] w-px bg-[#8a8a8a]"></i></div>
        <div class="flex flex-col items-center justify-between"><span>08s</span><i class="h-[5px] w-px bg-[#8a8a8a]"></i></div>
        <div class="flex flex-col items-center justify-between"><span>10s</span><i class="h-[5px] w-px bg-[#8a8a8a]"></i></div>
        <div class="flex flex-col items-center justify-between"><span>12s</span><i class="h-[5px] w-px bg-[#8a8a8a]"></i></div>
        <div class="flex flex-col items-center justify-between"><span>14s</span><i class="h-[5px] w-px bg-[#8a8a8a]"></i></div>
        <div class="flex flex-col items-center justify-between"><span>16s</span><i class="h-[5px] w-px bg-[#8a8a8a]"></i></div>
        <div class="flex flex-col items-center justify-between"><span>18s</span><i class="h-[5px] w-px bg-[#8a8a8a]"></i></div>
        <div class="flex flex-col items-center justify-between"><span>20s</span><i class="h-[5px] w-px bg-[#8a8a8a]"></i></div>
        <div class="flex flex-col items-center justify-between"><span>22s</span><i class="h-[5px] w-px bg-[#8a8a8a]"></i></div>
        <div class="flex flex-col items-center justify-between"><span>24s</span><i class="h-[5px] w-px bg-[#8a8a8a]"></i></div>
        <div class="flex flex-col items-center justify-between"><span>26s</span><i class="h-[5px] w-px bg-[#8a8a8a]"></i></div>
        <div class="flex flex-col items-center justify-between"><span>28s</span><i class="h-[5px] w-px bg-[#8a8a8a]"></i></div>
        <span class="absolute left-0">0:00s</span><span class="absolute right-0">30s</span>
      </div>
      <div class="flex h-[17px] border-y border-black"><span class="h-full w-[7px] rounded-l-[4px] bg-[#2d8ceb]"></span><span class="flex-1 border-t border-[#777] bg-[#606060]"></span><span class="h-full w-[6px] rounded-r-[4px] bg-[#2d8ceb]"></span></div>
      <div class="mx-[7px] h-[3px] bg-[#12c020]"></div>
      <div class="flex h-[17px] border-b border-[#1c1c1c] bg-[#484848] pl-[7px] pr-[7px]"><div class="flex-1 border-t border-[#d89090] bg-gradient-to-b from-[#ac4848] to-[#934444]"></div></div>
      <div class="mx-[7px] flex-1 bg-[#313131]"></div>
      <!-- playhead -->
      <div class="absolute bottom-0 left-[1px] top-[48px] flex w-[13px] flex-col items-center"><svg class="h-[13px] w-[12px] shrink-0" viewBox="0 0 12 13"><path d="M0 0h4v2h4V0h4v7l-6 6-6-6z" fill="#2d8ceb"/></svg><span class="w-px flex-1 bg-[#2d8ceb]"></span></div>
    </div>
    <div class="flex w-[18px] shrink-0 flex-col border-l border-[#161616] pt-[64px]">
      <svg class="mx-[3px] h-[15px] w-[12px]" viewBox="0 0 12 15"><path d="M0 1h12v9l-6 5-6-5z" fill="#a8a8a8"/></svg>
      <svg class="mt-[6px] h-[14px] w-[15px]" viewBox="0 0 15 14"><path d="M8 3h7v7H8z" fill="#a8a8a8"/><path d="M7 1L1 8h4" fill="none" stroke="#a8a8a8" stroke-width="1.300"/><circle cx="7" cy="9" r="3" fill="#232323" stroke="#a8a8a8" stroke-width="1.300"/></svg>
    </div>
  </div>
  <!-- footer -->
  <footer class="flex h-[19px] shrink-0 items-center border-b border-t border-b-[#161616] border-t-black pb-px pl-[5px] text-[#8a8a8a]">
    <button aria-label="Layer switches pane" class="flex size-[14px] items-center justify-center bg-[#161616] text-[#2d8ceb]"><svg class="size-[11px]" viewBox="0 0 11 11" fill="none" stroke="currentColor"><path d="M.5.500h6v6h-6zM2.500 2.500h6v6h-6z"/><path d="M4.500 4.500h6v6h-6z" fill="#161616"/><path d="M7.500 6v3M6 7.500h3"/></svg></button>
    <button aria-label="Transfer controls pane" class="ml-[6px]"><svg class="size-[11px]" viewBox="0 0 12 12" fill="none" stroke="#a8a8a8" stroke-width="1.300"><circle cx="4.500" cy="4" r="3.300"/><path d="M5 5h6v6H5z"/><path d="M5 5h3v3H5z" fill="#a8a8a8"/></svg></button>
    <button aria-label="In/out pane" class="ml-[7px]"><svg class="h-[12px] w-[11px]" viewBox="0 0 11 12"><path d="M3 0h5v12H3zM2.500 3L0 6l2.500 3zM8.500 3L11 6 8.500 9z" fill="#8a8a8a"/></svg></button>
    <button class="ml-[210px] h-[16px] w-[136px] rounded-[2px] border border-[#2e2e2e] bg-[#1f1f1f] leading-[14px]">Toggle Switches / Modes</button>
    <div class="ml-[140px] flex items-center gap-[11px]"><svg class="h-[5px] w-[9px]" viewBox="0 0 9 5"><path d="M0 5l3-3 1 1 2-3 3 5z" fill="#b5b5b5"/></svg><input type="range" aria-label="Timeline zoom" min="0" max="100" value="0" class="h-[10px] w-[48px] appearance-none bg-[linear-gradient(#484848,#484848)] bg-[length:100%_2px] bg-center bg-no-repeat [&::-webkit-slider-thumb]:size-[10px] [&::-webkit-slider-thumb]:appearance-none [&::-webkit-slider-thumb]:rounded-full [&::-webkit-slider-thumb]:border-2 [&::-webkit-slider-thumb]:border-[#8a8a8a] [&::-webkit-slider-thumb]:bg-[#232323]"><svg class="h-[7px] w-[16px]" viewBox="0 0 16 7"><path d="M0 7l4-6h1.500L2 7zM3 7l4-5.500 1.500 1L11 0l5 7z" fill="#b5b5b5"/></svg></div>
  </footer>
  <!-- activation notice -->
  <div class="pointer-events-none absolute right-[58px] top-[134px] font-['Open_Sans',sans-serif] text-[#838383]"><p class="text-[19px] leading-6">Activate Windows</p><p class="text-[14px] leading-[22px]">Go to PC settings to activate Windows.</p></div>
</section>
</body>
</html>
